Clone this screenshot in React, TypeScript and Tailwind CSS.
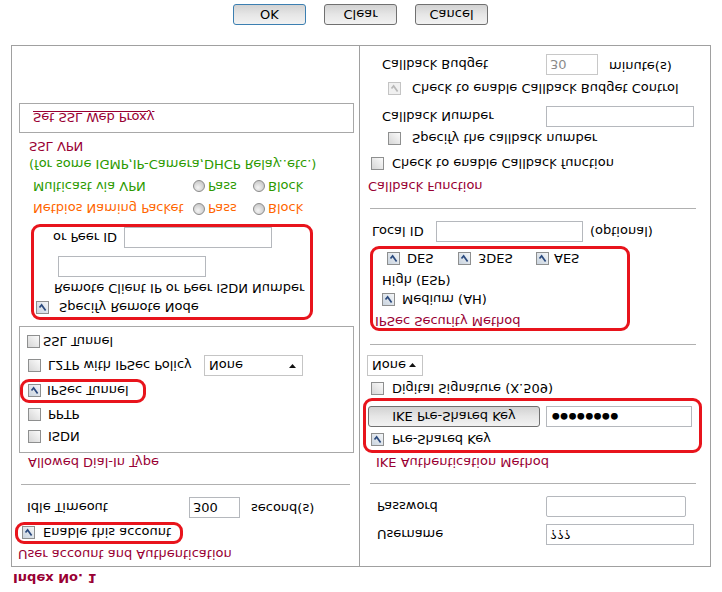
import React from "react";

const maroon = "text-[#990033]";

function Chk({ checked = false, disabled = false }: { checked?: boolean; disabled?: boolean }) {
  return (
    <span
      className={`inline-flex shrink-0 items-center justify-center w-[13px] h-[13px] border ${
        disabled ? "border-[#c4c4c4] bg-[#f0f0f0]" : checked ? "border-[#8e8f8f] bg-gradient-to-br from-[#c9d3de] to-[#f4f6f8]" : "border-[#8e8f8f] bg-gradient-to-br from-[#d6d6d6] to-[#fbfbfb]"
      }`}
    >
      {checked && (
        <svg width="9" height="9" viewBox="0 0 9 9">
          <path d="M1.5 4.5 L3.6 7 L7.6 1.5" fill="none" stroke={disabled ? "#b8b8b8" : "#2b4a7e"} strokeWidth="1.7" />
        </svg>
      )}
    </span>
  );
}

function Radio() {
  return (
    <span className="inline-block shrink-0 w-[12px] h-[12px] rounded-full border border-[#8b8b8b] bg-[radial-gradient(circle_at_40%_35%,#f4f4f4,#b9b9b9)]" />
  );
}

function Input({ w, value, cls = "" }: { w: string; value?: string; cls?: string }) {
  return (
    <span className={`inline-flex items-center h-[21px] ${w} border border-[#b5b8bd] bg-white px-[3px] ${cls}`}>
      {value}
    </span>
  );
}

function Select({ w }: { w: string }) {
  return (
    <span className={`inline-flex items-center justify-between h-[21px] ${w} border border-[#c5c5c5] bg-white pl-[4px] pr-[6px]`}>
      <span>None</span>
      <svg width="7" height="4" viewBox="0 0 7 4">
        <path d="M0 0 H7 L3.5 4 Z" fill="#111" />
      </svg>
    </span>
  );
}

function Btn({ label, focus = false, w = "w-[73px]" }: { label: string; focus?: boolean; w?: string }) {
  return (
    <span
      className={`inline-flex items-center justify-center h-[21px] ${w} rounded-[3px] border ${
        focus ? "border-[#3c7fb1]" : "border-[#707070]"
      } bg-gradient-to-b from-[#f2f2f2] via-[#e6e6e6] to-[#d2d2d2]`}
    >
      {label}
    </span>
  );
}

const redBox = "border-[3px] border-[#e8141c] rounded-[9px]";

export default function App() {
  return (
    <div
      className="w-[722px] h-[592px] overflow-hidden bg-white text-[13px] text-black leading-none -scale-y-100"
      style={{ fontFamily: "'DejaVu Sans', Verdana, sans-serif" }}
    >
      <div className={`h-[25px] pl-[13px] pt-[7px] font-bold ${maroon}`}>Index No. 1</div>

      <div className="ml-[11px] w-[700px] h-[522px] border border-[#a0a0a0] flex">
        {/* left column */}
        <div className="w-[348px] border-r border-[#a0a0a0] flex flex-col">
          <div className={`h-[22px] flex items-center pl-[6px] ${maroon}`}>User account and Authentication</div>
          <div className={`ml-[3px] w-[168px] h-[22px] ${redBox} flex items-center gap-[8px] pl-[4px]`}>
            <Chk checked />
            <span>Enable this account</span>
          </div>
          <div className="mt-[2px] h-[25px] flex items-center pl-[15px]">
            <span className="w-[162px]">Idle Timeout</span>
            <Input w="w-[51px]" value="300" />
            <span className="ml-[11px] -mt-[3px]">second(s)</span>
          </div>
          <div className="mt-[10px] ml-[9px] w-[329px] border-t border-[#b0b0b0]" />
          <div className={`mt-[11px] h-[20px] flex items-center pl-[16px] ${maroon}`}>Allowed Dial-In Type</div>
          <div className="ml-[7px] w-[335px] h-[127px] border border-[#a8a8a8] flex flex-col pt-[4px]">
            <div className="h-[22px] flex items-center gap-[7px] pl-[8px]">
              <Chk />
              <span>ISDN</span>
            </div>
            <div className="h-[23px] flex items-center gap-[7px] pl-[8px]">
              <Chk />
              <span>PPTP</span>
            </div>
            <div className={`w-[126px] h-[24px] ${redBox} flex items-center gap-[6px] pl-[5px]`}>
              <Chk checked />
              <span>IPSec Tunnel</span>
            </div>
            <div className="h-[26px] flex items-center pl-[8px]">
              <Chk />
              <span className="ml-[7px] w-[156px]">L2TP with IPSec Policy</span>
              <Select w="w-[99px]" />
            </div>
            <div className="h-[22px] flex items-center gap-[3px] pl-[7px]">
              <Chk />
              <span>SSL Tunnel</span>
            </div>
          </div>
          <div className={`mt-[6px] ml-[19px] w-[282px] h-[96px] ${redBox} flex flex-col`}>
            <div className="h-[19px] flex items-center gap-[10px] pl-[2px]">
              <Chk checked />
              <span>Specify Remote Node</span>
            </div>
            <div className="h-[20px] flex items-center pl-[20px]">Remote Client IP or Peer ISDN Number</div>
            <div className="mt-[2px] pl-[24px]">
              <Input w="w-[148px]" />
            </div>
            <div className="mt-[5px] h-[22px] flex items-center pl-[19px]">
              <span className="w-[71px]">or Peer ID</span>
              <Input w="w-[148px]" />
            </div>
          </div>
          <div className="mt-[4px] h-[22px] flex items-center pl-[21px] text-[#ff6600]">
            <span className="w-[160px]">Netbios Naming Packet</span>
            <Radio />
            <span className="ml-[3px] w-[45px]">Pass</span>
            <Radio />
            <span className="ml-[3px]">Block</span>
          </div>
          <div className="h-[23px] flex items-center pl-[21px] text-[#2c9a00]">
            <span className="w-[160px]">Multicast via VPN</span>
            <Radio />
            <span className="ml-[3px] w-[45px]">Pass</span>
            <Radio />
            <span className="ml-[3px]">Block</span>
          </div>
          <div className="h-[20px] flex items-center pl-[17px] text-[#2c9a00]">(for some IGMP,IP-Camera,DHCP Relay..etc.)</div>
          <div className={`h-[16px] flex items-center pl-[17px] ${maroon}`}>SSL VPN</div>
          <div className="mt-[6px] ml-[7px] w-[335px] h-[30px] border border-[#a8a8a8] flex items-center pl-[13px]">
            <span className={`${maroon} underline`}>Set SSL Web Proxy</span>
          </div>
        </div>

        {/* right column */}
        <div className="flex-1 flex flex-col">
          <div className="mt-[21px] h-[20px] flex items-center pl-[17px]">
            <span className="w-[169px]">Username</span>
            <Input w="w-[148px]" value="???" />
          </div>
          <div className="mt-[8px] h-[20px] flex items-center pl-[17px]">
            <span className="w-[169px]">Password</span>
            <Input w="w-[140px]" cls="border-[#7eb4ea] rounded-[2px]" />
          </div>
          <div className="mt-[13px] ml-[10px] w-[326px] border-t border-[#b0b0b0]" />
          <div className={`mt-[10px] h-[20px] flex items-center pl-[16px] ${maroon}`}>IKE Authentication Method</div>
          <div className={`ml-[3px] w-[339px] h-[55px] ${redBox} flex flex-col`}>
            <div className="h-[20px] flex items-center gap-[8px] pl-[5px]">
              <Chk checked />
              <span>Pre-Shared Key</span>
            </div>
            <div className="mt-[3px] flex items-center pl-[2px]">
              <Btn label="IKE Pre-Shared Key" w="w-[172px]" />
              <Input w="w-[146px]" cls="ml-[6px] pl-[5px] text-[9px] tracking-[0.5px]" value="●●●●●●●●" />
            </div>
          </div>
          <div className="h-[18px] flex items-center gap-[8px] pl-[11px]">
            <Chk />
            <span>Digital Signature (X.509)</span>
          </div>
          <div className="mt-[4px] pl-[7px]">
            <Select w="w-[56px]" />
          </div>
          <div className="mt-[10px] ml-[10px] w-[326px] border-t border-[#b0b0b0]" />
          <div className={`mt-[13px] ml-[10px] w-[260px] h-[85px] ${redBox} flex flex-col`}>
            <div className={`h-[14px] flex items-center pl-[2px] ${maroon}`}>IPSec Security Method</div>
            <div className="mt-[5px] h-[20px] flex items-center gap-[7px] pl-[9px]">
              <Chk checked />
              <span>Medium (AH)</span>
            </div>
            <div className="h-[19px] flex items-center pl-[9px]">High (ESP)</div>
            <div className="mt-[2px] h-[20px] flex items-center pl-[14px]">
              <Chk checked />
              <span className="ml-[7px] w-[51px]">DES</span>
              <Chk checked />
              <span className="ml-[7px] w-[58px]">3DES</span>
              <Chk checked />
              <span className="ml-[5px]">AES</span>
            </div>
          </div>
          <div className="mt-[4px] h-[21px] flex items-center pl-[12px]">
            <span className="w-[64px]">Local ID</span>
            <Input w="w-[147px]" />
            <span className="ml-[7px]">(optional)</span>
          </div>
          <div className="mt-[12px] ml-[10px] w-[326px] border-t border-[#b0b0b0]" />
          <div className={`mt-[11px] h-[20px] flex items-center pl-[8px] ${maroon}`}>Callback Function</div>
          <div className="mt-[3px] h-[20px] flex items-center gap-[8px] pl-[11px]">
            <Chk />
            <span>Check to enable Callback function</span>
          </div>
          <div className="mt-[5px] h-[20px] flex items-center gap-[11px] pl-[28px]">
            <Chk />
            <span>Specify the callback number</span>
          </div>
          <div className="mt-[2px] h-[21px] flex items-center pl-[22px]">
            <span className="w-[164px]">Callback Number</span>
            <Input w="w-[148px]" />
          </div>
          <div className="mt-[7px] h-[20px] flex items-center gap-[11px] pl-[28px]">
            <Chk checked disabled />
            <span>Check to enable Callback Budget Control</span>
          </div>
          <div className="mt-[4px] h-[20px] flex items-center pl-[22px]">
            <span className="w-[164px]">Callback Budget</span>
            <Input w="w-[52px]" value="30" cls="text-[#8a8a8a] border-[#c8c8c8]" />
            <span className="ml-[11px] -mt-[3px]">minute(s)</span>
          </div>
        </div>
      </div>

      <div className="mt-[20px] pl-[233px] flex gap-[18px]">
        <Btn label="OK" focus />
        <Btn label="Clear" />
        <Btn label="Cancel" />
      </div>
    </div>
  );
}
